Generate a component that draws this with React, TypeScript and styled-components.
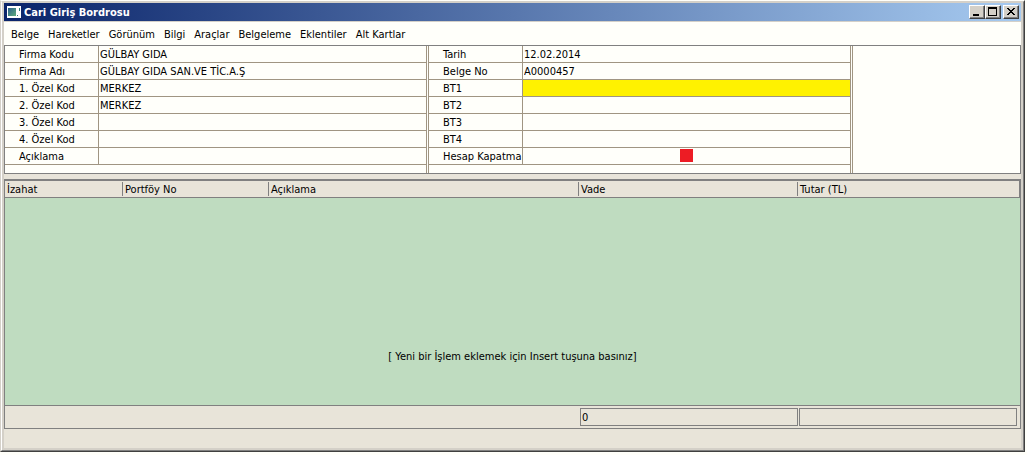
import React from "react";
import styled, { createGlobalStyle } from "styled-components";

const c = {
  page: "#fffffa",
  face: "#d4d0c8",
  panel: "#e8e4d9",
  paper: "#fffffa",
  line: "#808080",
  grid: "#a09582",
  dark: "#404040",
  green: "#bfdcc0",
  yellow: "#fff200",
};

const GlobalStyle = createGlobalStyle`
  * { box-sizing: border-box; }
  body {
    margin: 0;
    background: ${c.page};
    color: #000;
    font: 11px/16px Tahoma, "DejaVu Sans Condensed", "Noto Sans", sans-serif;
  }
  input, button { font: inherit; color: inherit; }
`;

const Page = styled.div`
  padding: 0 2px 3px 0;
`;

const Window = styled.section`
  border: 1px solid ${c.face};
  border-top-color: ${c.page};
  border-right-color: ${c.dark};
  border-bottom-color: ${c.dark};
`;

const Frame = styled.div`
  border: 1px solid #fff;
  border-top-color: ${c.face};
  border-right-color: ${c.line};
  border-bottom-color: ${c.line};
  padding: 1px 2px 2px;
  background: ${c.face};
`;

const TitleBar = styled.header`
  display: flex;
  align-items: center;
  height: 18px;
  padding: 0 2px 0 3px;
  margin-bottom: 1px;
  background: linear-gradient(90deg, #0a246a, #a6caf0);
`;

const Title = styled.h1`
  flex: 1;
  margin: 0 0 0 3px;
  font-size: 11px;
  line-height: 18px;
  padding-top: 1px;
  font-weight: bold;
  color: #fff;
`;

const CaptionButton = styled.button<{ $apart?: boolean }>`
  display: block;
  width: 16px;
  height: 14px;
  padding: 0;
  margin-left: ${(p) => (p.$apart ? 2 : 0)}px;
  border: 1px solid;
  border-color: #fff ${c.dark} ${c.dark} #fff;
  box-shadow: inset -1px -1px 0 ${c.line};
  background: ${c.face};

  svg { display: block; }
`;

const MenuBar = styled.nav`
  display: flex;
  height: 23px;
  padding-left: 3px;
  background: ${c.paper};
`;

const MenuItem = styled.button`
  padding: 2px 5px 0 4px;
  border: 0;
  background: none;
  white-space: nowrap;
`;

const Client = styled.main`
  background: ${c.panel};
  padding-bottom: 19px;
`;

const Form = styled.form`
  display: grid;
  grid-template-columns: 423fr 424fr 168fr;
  border: 1px solid ${c.line};
  background: ${c.paper};
`;

const FieldGroup = styled.div`
  padding-bottom: 8px;
  margin-right: 1px;
  border-right: 1px solid ${c.grid};

  & + & {
    border-left: 1px solid ${c.grid};
  }
`;

const SidePanel = styled.div`
  border-left: 1px solid ${c.grid};
`;

const FieldRow = styled.div`
  display: flex;
  height: 17px;
  border-bottom: 1px solid ${c.grid};
`;

const FieldLabel = styled.label`
  flex: none;
  width: 94px;
  height: 16px;
  padding-left: 14px;
  line-height: 18px;
  border-right: 1px solid ${c.grid};
  white-space: nowrap;
`;

const FieldInput = styled.input<{ $active?: boolean }>`
  flex: 1;
  min-width: 0;
  height: 16px;
  padding: 2px 1px 0;
  border: 0;
  outline: 0;
  background: ${(p) => (p.$active ? c.yellow : "transparent")};
`;

const CheckCell = styled.div`
  flex: 1;
  display: flex;
  justify-content: center;
`;

const Check = styled.input`
  appearance: none;
  width: 13px;
  height: 13px;
  margin: 1px 0 0;
  background: #ed1c24;
`;

const Grid = styled.div`
  margin-top: 5px;
  border: 1px solid ${c.line};
  border-top-width: 2px;
`;

const Table = styled.table`
  width: 100%;
  table-layout: fixed;
  border-collapse: collapse;

  thead tr {
    border-bottom: 1px solid ${c.line};
  }
`;

const Col = styled.col<{ $width?: number }>`
  width: ${(p) => (p.$width ? `${p.$width}px` : "auto")};
`;

const HeadCell = styled.th`
  height: 16px;
  padding: 2px 2px 0;
  line-height: 14px;
  font-weight: normal;
  text-align: left;
  background: linear-gradient(${c.line}, ${c.line}) right center / 1px 14px no-repeat;

  &:last-child {
    background-position: right top;
    background-size: 1px 16px;
  }
`;

const EmptyCell = styled.td`
  height: 207px;
  padding: 112px 0 0;
  background: ${c.green};
  text-align: center;
`;

const Totals = styled.div`
  display: flex;
  justify-content: flex-end;
  gap: 1px;
  padding: 2px 3px 2px 2px;
  border-top: 1px solid ${c.line};
`;

const Total = styled.input`
  width: 218px;
  height: 18px;
  padding: 1px 1px 0;
  border: 1px solid ${c.line};
  outline: 0;
  background: transparent;
`;

const menus = ["Belge", "Hareketler", "Görünüm", "Bilgi", "Araçlar", "Belgeleme", "Eklentiler", "Alt Kartlar"];

type Field = { id: string; label: string; value?: string; active?: boolean; check?: boolean };

const company: Field[] = [
  { id: "kod", label: "Firma Kodu", value: "GÜLBAY GIDA" },
  { id: "adi", label: "Firma Adı", value: "GÜLBAY GIDA SAN.VE TİC.A.Ş" },
  { id: "ozel1", label: "1. Özel Kod", value: "MERKEZ" },
  { id: "ozel2", label: "2. Özel Kod", value: "MERKEZ" },
  { id: "ozel3", label: "3. Özel Kod" },
  { id: "ozel4", label: "4. Özel Kod" },
  { id: "aciklama", label: "Açıklama" },
];

const doc: Field[] = [
  { id: "tarih", label: "Tarih", value: "12.02.2014" },
  { id: "belge", label: "Belge No", value: "A0000457" },
  { id: "bt1", label: "BT1", active: true },
  { id: "bt2", label: "BT2" },
  { id: "bt3", label: "BT3" },
  { id: "bt4", label: "BT4" },
  { id: "hesap", label: "Hesap Kapatma", check: true },
];

const columns: { name: string; width?: number }[] = [
  { name: "İzahat", width: 118 },
  { name: "Portföy No", width: 146 },
  { name: "Açıklama" },
  { name: "Vade", width: 219 },
  { name: "Tutar (TL)", width: 222 },
];

function Fields({ items }: { items: Field[] }) {
  return (
    <FieldGroup>
      {items.map((f) => (
        <FieldRow key={f.id}>
          <FieldLabel htmlFor={f.id}>{f.label}</FieldLabel>
          {f.check ? (
            <CheckCell>
              <Check id={f.id} type="checkbox" />
            </CheckCell>
          ) : (
            <FieldInput id={f.id} defaultValue={f.value ?? ""} $active={f.active} />
          )}
        </FieldRow>
      ))}
    </FieldGroup>
  );
}

function AppIcon() {
  return (
    <svg width="14" height="12" viewBox="0 0 14 12" shapeRendering="crispEdges" aria-hidden="true">
      <defs>
        <linearGradient id="screen" x1="0" y1="0" x2="1" y2="1">
          <stop offset="0" stopColor="#2c5f8c" />
          <stop offset="1" stopColor="#5fae7c" />
        </linearGradient>
      </defs>
      <path fill="#fff" d="M0 0h14v12H0z" />
      <path fill="url(#screen)" d="M1 2h8v8H1z" />
      <path fill="#2f7f78" d="M12 2h1v3h-1zM10 9h1v1h-1z" />
    </svg>
  );
}

export default function App() {
  return (
    <Page>
      <GlobalStyle />
      <Window>
        <Frame>
          <TitleBar>
            <AppIcon />
            <Title>Cari Giriş Bordrosu</Title>
            <CaptionButton type="button" aria-label="Simge durumuna küçült">
              <svg width="14" height="12" shapeRendering="crispEdges">
                <path d="M3 8h6v2H3z" />
              </svg>
            </CaptionButton>
            <CaptionButton type="button" aria-label="Ekranı kapla">
              <svg width="14" height="12" shapeRendering="crispEdges">
                <path fillRule="evenodd" d="M2 1h9v9H2zM3 3v6h7V3z" />
              </svg>
            </CaptionButton>
            <CaptionButton type="button" aria-label="Kapat" $apart>
              <svg width="14" height="12" shapeRendering="crispEdges">
                <path d="M3 2h2v1h1v1h2V3h1V2h2v1h-1v1H9v1H8v1h1v1h1v1h1v1H9V8H8V7H6v1H5v1H3V8h1V7h1V6h1V5H5V4H4V3H3z" />
              </svg>
            </CaptionButton>
          </TitleBar>
          <MenuBar>
            {menus.map((m) => (
              <MenuItem key={m} type="button">{m}</MenuItem>
            ))}
          </MenuBar>
          <Client>
            <Form>
              <Fields items={company} />
              <Fields items={doc} />
              <SidePanel />
            </Form>
            <Grid>
              <Table>
                <colgroup>
                  {columns.map((col) => (
                    <Col key={col.name} $width={col.width} />
                  ))}
                </colgroup>
                <thead>
                  <tr>
                    {columns.map((col) => (
                      <HeadCell key={col.name} scope="col">{col.name}</HeadCell>
                    ))}
                  </tr>
                </thead>
                <tbody>
                  <tr>
                    <EmptyCell colSpan={5}>[ Yeni bir İşlem eklemek için Insert tuşuna basınız]</EmptyCell>
                  </tr>
                </tbody>
              </Table>
              <Totals>
                <Total aria-label="Vade toplamı" defaultValue="0" />
                <Total aria-label="Tutar toplamı" />
              </Totals>
            </Grid>
          </Client>
        </Frame>
      </Window>
    </Page>
  );
}
